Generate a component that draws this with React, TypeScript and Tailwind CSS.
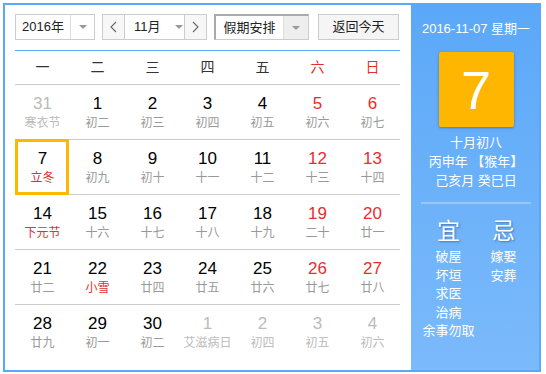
import React from "react";

type Day = { n: number; l: string; dim?: boolean; redNum?: boolean; redLunar?: boolean; today?: boolean };

const rows: Day[][] = [
  [
    { n: 31, l: "寒衣节", dim: true },
    { n: 1, l: "初二" },
    { n: 2, l: "初三" },
    { n: 3, l: "初四" },
    { n: 4, l: "初五" },
    { n: 5, l: "初六", redNum: true },
    { n: 6, l: "初七", redNum: true },
  ],
  [
    { n: 7, l: "立冬", redLunar: true, today: true },
    { n: 8, l: "初九" },
    { n: 9, l: "初十" },
    { n: 10, l: "十一" },
    { n: 11, l: "十二" },
    { n: 12, l: "十三", redNum: true },
    { n: 13, l: "十四", redNum: true },
  ],
  [
    { n: 14, l: "下元节", redLunar: true },
    { n: 15, l: "十六" },
    { n: 16, l: "十七" },
    { n: 17, l: "十八" },
    { n: 18, l: "十九" },
    { n: 19, l: "二十", redNum: true },
    { n: 20, l: "廿一", redNum: true },
  ],
  [
    { n: 21, l: "廿二" },
    { n: 22, l: "小雪", redLunar: true },
    { n: 23, l: "廿四" },
    { n: 24, l: "廿五" },
    { n: 25, l: "廿六" },
    { n: 26, l: "廿七", redNum: true },
    { n: 27, l: "廿八", redNum: true },
  ],
  [
    { n: 28, l: "廿九" },
    { n: 29, l: "初一" },
    { n: 30, l: "初二" },
    { n: 1, l: "艾滋病日", dim: true },
    { n: 2, l: "初四", dim: true },
    { n: 3, l: "初五", dim: true },
    { n: 4, l: "初六", dim: true },
  ],
];

const weekdays = ["一", "二", "三", "四", "五", "六", "日"];

function Tri() {
  return <span className="block shrink-0 w-0 h-0 border-l-[4px] border-r-[4px] border-t-[4px] border-l-transparent border-r-transparent border-t-[#999]" />;
}

function Chevron({ dir }: { dir: "l" | "r" }) {
  return (
    <svg width="7" height="12" viewBox="0 0 7 12">
      <polyline
        points={dir === "l" ? "6,1 1,6 6,11" : "1,1 6,6 1,11"}
        fill="none"
        stroke="#666"
        strokeWidth="1.1"
      />
    </svg>
  );
}

export default function App() {
  return (
    <div className="ml-[3px] mt-[3px] w-[538px] h-[369px] border-2 border-[#5ba8f8] flex bg-white font-['Liberation_Sans','Noto_Sans_CJK_SC',sans-serif] text-[#333]">
      {/* Left */}
      <div className="w-[406px] pt-[9px] pl-[10px]">
        {/* Controls */}
        <div className="flex items-center h-[26px] text-[13px]">
          <div className="flex w-[80px] h-[26px] border border-[#ccc] bg-white">
            <div className="w-[54px] flex items-center justify-center text-[#222] whitespace-nowrap">2016年</div>
            <div className="flex-1 border-l border-[#ddd] flex items-center justify-center">
              <Tri />
            </div>
          </div>
          <div className="ml-[7px] flex w-[105px] h-[26px] border border-[#ccc]">
            <div className="w-[22px] shrink-0 bg-[#f7f7f7] border-r border-[#ccc] flex items-center justify-center">
              <Chevron dir="l" />
            </div>
            <div className="flex-1 min-w-0 bg-white flex items-center pl-[9px] gap-[14px] text-[#222] whitespace-nowrap">
              <span className="whitespace-nowrap">11月</span>
              <Tri />
            </div>
            <div className="w-[22px] shrink-0 bg-[#f7f7f7] border-l border-[#ccc] flex items-center justify-center">
              <Chevron dir="r" />
            </div>
          </div>
          <div className="ml-[7px] flex w-[95px] h-[26px] border border-t-2 border-l-2 border-t-[#aaa] border-l-[#aaa] border-r-[#ccc] border-b-[#ccc]">
            <div className="w-[67px] bg-white flex items-center justify-center text-[#222] whitespace-nowrap">假期安排</div>
            <div className="flex-1 bg-[#eee] border-l border-[#ddd] flex items-center justify-center">
              <Tri />
            </div>
          </div>
          <div className="ml-[9px] w-[81px] h-[26px] border border-[#ccc] bg-[#f5f5f5] flex items-center justify-center text-[#222] whitespace-nowrap">
            返回今天
          </div>
        </div>

        {/* Calendar */}
        <div className="w-[385px] mt-[10px] border-t border-[#5ba8f8]">
          <div className="grid grid-cols-7 h-[34px] border-b border-[#ccc] text-[14px]">
            {weekdays.map((w, i) => (
              <div key={w} className={`flex items-center justify-center ${i >= 5 ? "text-[#e62e2e]" : "text-[#333]"}`}>
                {w}
              </div>
            ))}
          </div>
          {rows.map((row, ri) => (
            <div key={ri} className={`grid grid-cols-7 h-[55px] ${ri < 4 ? "border-b border-[#ccc]" : ""}`}>
              {row.map((d, ci) => (
                <div key={ci} className="relative flex flex-col items-center pt-[9px]">
                  {d.today && (
                    <div className="absolute -top-px -bottom-px left-0 right-px border-[3px] border-[#ffb800]" />
                  )}
                  <div
                    className={`text-[17px] leading-[20px] ${
                      d.dim ? "text-[#bbb]" : d.redNum ? "text-[#e62e2e]" : "text-[#000]"
                    }`}
                  >
                    {d.n}
                  </div>
                  <div
                    className={`mt-px text-[12px] leading-[16px] whitespace-nowrap ${
                      d.dim ? "text-[#bbb]" : d.redLunar ? "text-[#e62e2e]" : "text-[#999]"
                    }`}
                  >
                    {d.l}
                  </div>
                </div>
              ))}
            </div>
          ))}
        </div>
      </div>

      {/* Right panel */}
      <div className="flex-1 bg-gradient-to-b from-[#5ba8f8] to-[#7bbafb] pt-[15px] pl-[10px] pr-[8px] flex flex-col items-center text-white">
        <div className="text-[13px] leading-[18px] whitespace-nowrap">2016-11-07 星期一</div>
        <div className="mt-[14px] w-[75px] h-[75px] rounded-[2px] bg-[#ffb600] shadow-[0_1px_3px_rgba(0,0,0,0.3)] flex items-center justify-center text-[54px] leading-none">
          7
        </div>
        <div className="mt-[6px] text-[13px] leading-[19px] text-center whitespace-nowrap">
          <div>十月初八</div>
          <div>丙申年 【猴年】</div>
          <div>己亥月 癸巳日</div>
        </div>
        <div className="mt-[12px] w-full h-[2px] bg-white/30" />
        <div className="w-full grid grid-cols-2 mt-[14px]">
          <div className="flex flex-col items-center">
            <div className="text-[23px] leading-[26px] [text-shadow:1px_1px_2px_rgba(0,40,110,0.45)]">宜</div>
            <div className="mt-[4px] text-[13px] leading-[18.5px] text-center whitespace-nowrap">
              <div>破屋</div>
              <div>坏垣</div>
              <div>求医</div>
              <div>治病</div>
              <div>余事勿取</div>
            </div>
          </div>
          <div className="flex flex-col items-center">
            <div className="text-[23px] leading-[26px] [text-shadow:1px_1px_2px_rgba(0,40,110,0.45)]">忌</div>
            <div className="mt-[4px] text-[13px] leading-[18.5px] text-center whitespace-nowrap">
              <div>嫁娶</div>
              <div>安葬</div>
            </div>
          </div>
        </div>
      </div>
    </div>
  );
}
